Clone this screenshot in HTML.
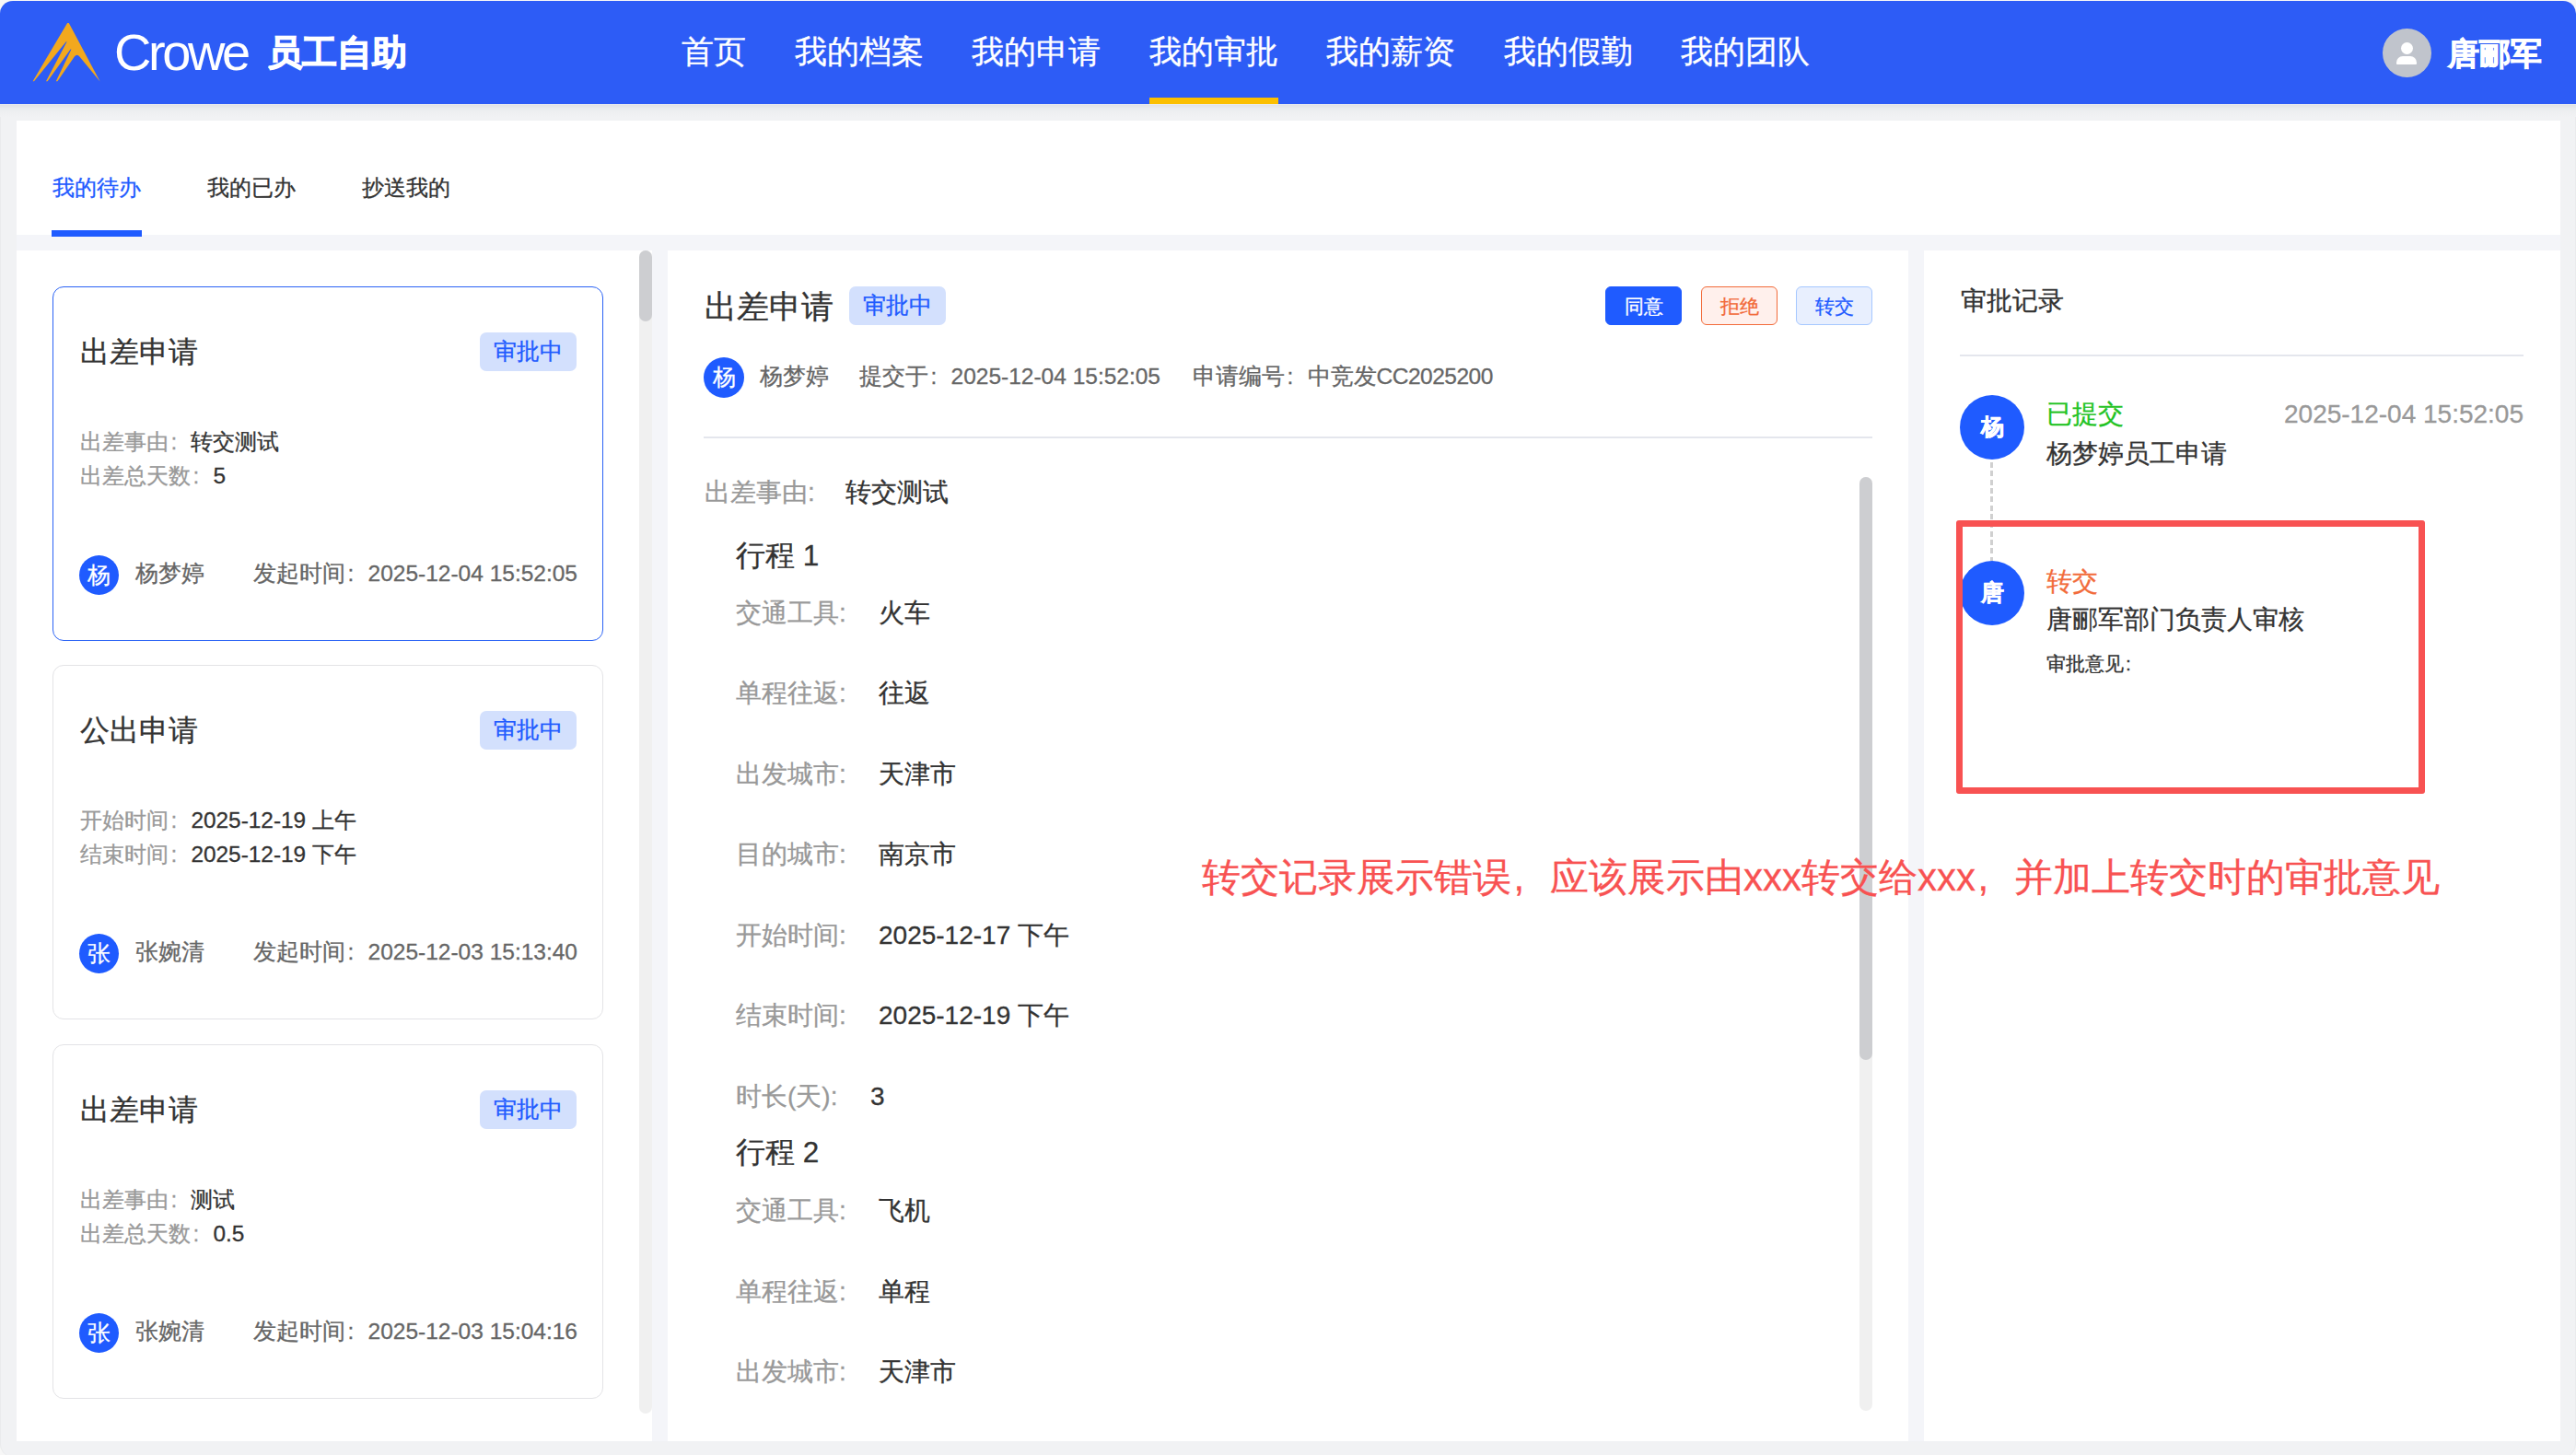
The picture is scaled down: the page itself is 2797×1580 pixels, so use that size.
<!DOCTYPE html>
<html><head><meta charset="utf-8">
<style>
html,body{margin:0;padding:0;width:2797px;height:1580px;overflow:hidden;background:#f7f7f7;}
body{font-family:"Liberation Sans",sans-serif;position:relative;-webkit-text-stroke:0.3px currentColor;}
.abs{position:absolute;}
.co{display:inline-block;width:1em;text-indent:0.1em;}
.cm{display:inline-block;width:1em;text-indent:0.06em;}
.t{position:absolute;white-space:nowrap;}
#page{position:absolute;left:0;top:1px;width:2797px;height:1580.5px;background:#f1f2f4;border-radius:14px;overflow:hidden;box-shadow:inset 1px 0 0 #eaebed,inset -1px 0 0 #eaebed;}
#hdr{position:absolute;left:0;top:0;width:2797px;height:112px;background:#2d5cf6;}
#shadow{position:absolute;left:0;top:112px;width:2797px;height:14px;background:linear-gradient(#f3f4f6 0px,#e2e3e6 1px,#eceef0 6px,#f1f2f4 14px);}
.nav{position:absolute;top:37px;font-size:35px;line-height:35px;color:#fff;}
.white{background:#fff;}
.card{position:absolute;left:57px;width:598px;height:385px;box-sizing:border-box;border:1.5px solid #e3e3e6;border-radius:12px;background:#fff;}
.card.sel{border-color:#2b63f5;}
.ctitle{position:absolute;left:29px;top:55px;font-size:31.5px;line-height:31.5px;color:#333;}
.tag{position:absolute;background:#d3e0fd;color:#1f5bff;border-radius:7px;font-size:24.5px;line-height:42px;height:42px;text-align:center;}
.row{position:absolute;left:29px;font-size:24.4px;line-height:24px;color:#999;}
.row b{font-weight:normal;color:#333;}
.av{position:absolute;border-radius:50%;background:#1f5bff;color:#fff;text-align:center;}
.sb-track{position:absolute;width:14px;background:#f0f0f0;border-radius:7px;}
.sb-thumb{position:absolute;width:14px;background:#cdced1;border-radius:7px;}
.lbl{position:absolute;font-size:28px;line-height:28px;color:#999;}
.val{position:absolute;font-size:28px;line-height:28px;color:#333;}
.btn{position:absolute;top:310px;height:42px;width:83px;box-sizing:border-box;border-radius:6px;font-size:21px;line-height:41px;text-align:center;}
</style></head>
<body>
<div id="page">
  <!-- header -->
  <div id="hdr">
    <svg class="abs" style="left:30px;top:19px" width="85" height="75" viewBox="30 20 85 75">
      <path d="M73.1 25 L74.8 25 L108.6 88.4 L86.4 61.4 Q83.6 58.2 80.8 61.6 L62.4 88.3 L60.8 88.3 L77 54.4 Q77.8 52.6 76.4 53.8 L51.6 88.3 L50 88.3 L72.2 46 Q73 44.2 71.6 45.6 L37 88.3 L35.6 88.3 Z" fill="#f2a81e"/>
    </svg>
    <div class="t" style="left:124px;top:27.5px;font-size:56px;line-height:56px;color:#fff;letter-spacing:-3.4px;-webkit-text-stroke:0;">Crowe</div>
    <div class="t" style="left:289.5px;top:36.5px;font-size:38.3px;line-height:38.3px;color:#fff;font-weight:bold;-webkit-text-stroke:1.1px #fff;">员工自助</div>
    <div class="nav" style="left:740px">首页</div>
    <div class="nav" style="left:863px">我的档案</div>
    <div class="nav" style="left:1055px">我的申请</div>
    <div class="nav" style="left:1248px">我的审批</div>
    <div class="nav" style="left:1440px">我的薪资</div>
    <div class="nav" style="left:1633px">我的假勤</div>
    <div class="nav" style="left:1825px">我的团队</div>
    <div class="abs" style="left:1248px;top:105px;width:140px;height:7px;background:#fbbf00;"></div>
    <div class="abs" style="left:2587px;top:30px;width:53px;height:53px;border-radius:50%;background:#c0c4cc;">
      <div class="abs" style="left:20px;top:15px;width:13px;height:13px;border-radius:50%;background:#fff;"></div>
      <div class="abs" style="left:15px;top:30px;width:22px;height:9px;border-radius:7px 7px 1px 1px;background:#fff;"></div>
    </div>
    <div class="t" style="left:2658px;top:39.5px;font-size:34px;line-height:34px;color:#fff;font-weight:bold;-webkit-text-stroke:0.9px #fff;">唐郦军</div>
  </div>
  <div id="shadow"></div>

  <!-- tabs card -->
  <div class="abs white" style="left:18px;top:130px;width:2762px;height:124px;"></div>
  <div class="abs" style="left:18px;top:254px;width:2762px;height:17px;background:#f4f5f9;"></div>
  <div class="t" style="left:56.5px;top:190.5px;font-size:24.4px;line-height:24.4px;color:#1f5bff;">我的待办</div>
  <div class="t" style="left:224.5px;top:190.5px;font-size:24.4px;line-height:24.4px;color:#333;">我的已办</div>
  <div class="t" style="left:392.5px;top:190.5px;font-size:24.4px;line-height:24.4px;color:#333;">抄送我的</div>
  <div class="abs" style="left:56px;top:249px;width:98px;height:7px;background:#1f5bff;"></div>

  <!-- left panel -->
  <div class="abs white" style="left:18px;top:271px;width:690px;height:1293px;"></div>
  <div class="abs" style="left:708px;top:271px;width:17px;height:1293px;background:#f4f5f9;"></div>
  <div class="sb-track" style="left:694px;top:271px;height:1263px;"></div>
  <div class="sb-thumb" style="left:694px;top:271px;height:77px;"></div>

  <div class="card sel" style="top:310px;">
    <div class="ctitle">出差申请</div>
    <div class="tag" style="left:463px;top:48.6px;width:105px;">审批中</div>
    <div class="row" style="top:156px;">出差事由<span class="co">:</span><b>转交测试</b></div>
    <div class="row" style="top:193px;">出差总天数<span class="co">:</span><b>5</b></div>
    <div class="av" style="left:28px;top:291px;width:43px;height:43px;font-size:24.5px;line-height:43px;">杨</div>
    <div class="t" style="left:89px;top:299px;font-size:24.5px;line-height:24.5px;color:#666;">杨梦婷</div>
    <div class="t" style="right:27px;top:299px;font-size:24.5px;line-height:24.5px;color:#666;">发起时间<span class="co">:</span>2025-12-04 15:52:05</div>
  </div>
  <div class="card" style="top:721px;">
    <div class="ctitle">公出申请</div>
    <div class="tag" style="left:463px;top:48.6px;width:105px;">审批中</div>
    <div class="row" style="top:156px;">开始时间<span class="co">:</span><b>2025-12-19 上午</b></div>
    <div class="row" style="top:193px;">结束时间<span class="co">:</span><b>2025-12-19 下午</b></div>
    <div class="av" style="left:28px;top:291px;width:43px;height:43px;font-size:24.5px;line-height:43px;">张</div>
    <div class="t" style="left:89px;top:299px;font-size:24.5px;line-height:24.5px;color:#666;">张婉清</div>
    <div class="t" style="right:27px;top:299px;font-size:24.5px;line-height:24.5px;color:#666;">发起时间<span class="co">:</span>2025-12-03 15:13:40</div>
  </div>
  <div class="card" style="top:1133px;">
    <div class="ctitle">出差申请</div>
    <div class="tag" style="left:463px;top:48.6px;width:105px;">审批中</div>
    <div class="row" style="top:156px;">出差事由<span class="co">:</span><b>测试</b></div>
    <div class="row" style="top:193px;">出差总天数<span class="co">:</span><b>0.5</b></div>
    <div class="av" style="left:28px;top:291px;width:43px;height:43px;font-size:24.5px;line-height:43px;">张</div>
    <div class="t" style="left:89px;top:299px;font-size:24.5px;line-height:24.5px;color:#666;">张婉清</div>
    <div class="t" style="right:27px;top:299px;font-size:24.5px;line-height:24.5px;color:#666;">发起时间<span class="co">:</span>2025-12-03 15:04:16</div>
  </div>

  <!-- middle panel -->
  <div class="abs white" style="left:725px;top:271px;width:1347px;height:1293px;"></div>
  <div class="abs" style="left:2072px;top:271px;width:17px;height:1293px;background:#f4f5f9;"></div>
  <div class="t" style="left:765px;top:314px;font-size:35px;line-height:35px;color:#333;">出差申请</div>
  <div class="tag" style="left:922px;top:310px;width:105px;">审批中</div>
  <div class="btn" style="left:1743px;background:#1f5bff;color:#fff;border:1px solid #1f5bff;">同意</div>
  <div class="btn" style="left:1847px;background:#fff0ec;color:#f26b3a;border:1.5px solid #f26b3a;">拒绝</div>
  <div class="btn" style="left:1950px;background:#e8effe;color:#1f5bff;border:1.5px solid #a6c8ff;">转交</div>
  <div class="av" style="left:764px;top:387px;width:44px;height:44px;font-size:24.5px;line-height:44px;">杨</div>
  <div class="t" style="left:825px;top:396px;font-size:24.5px;line-height:24.5px;color:#666;">杨梦婷</div>
  <div class="t" style="left:933px;top:396px;font-size:24.5px;line-height:24.5px;color:#666;">提交于<span class="co">:</span>2025-12-04 15:52:05</div>
  <div class="t" style="left:1295px;top:396px;font-size:24.5px;line-height:24.5px;color:#666;">申请编号<span class="co">:</span>中竞发<span style="letter-spacing:-0.5px">CC2025200</span></div>
  <div class="abs" style="left:764px;top:473px;width:1269px;height:2px;background:#e4e6ed;"></div>

  <div class="sb-track" style="left:2019px;top:517px;height:1014px;"></div>
  <div class="sb-thumb" style="left:2019px;top:517px;height:633px;"></div>

  <div class="lbl" style="left:765px;top:520px;">出差事由:</div>
  <div class="val" style="left:918px;top:520px;">转交测试</div>
  <div class="t" style="left:799px;top:587px;font-size:31.5px;line-height:31.5px;color:#333;">行程 1</div>
  <div class="lbl" style="left:799px;top:651px;">交通工具:</div><div class="val" style="left:954px;top:651px;">火车</div>
  <div class="lbl" style="left:799px;top:738px;">单程往返:</div><div class="val" style="left:954px;top:738px;">往返</div>
  <div class="lbl" style="left:799px;top:826px;">出发城市:</div><div class="val" style="left:954px;top:826px;">天津市</div>
  <div class="lbl" style="left:799px;top:913px;">目的城市:</div><div class="val" style="left:954px;top:913px;">南京市</div>
  <div class="lbl" style="left:799px;top:1001px;">开始时间:</div><div class="val" style="left:954px;top:1001px;">2025-12-17 下午</div>
  <div class="lbl" style="left:799px;top:1088px;">结束时间:</div><div class="val" style="left:954px;top:1088px;">2025-12-19 下午</div>
  <div class="lbl" style="left:799px;top:1176px;">时长(天):</div><div class="val" style="left:945px;top:1176px;">3</div>
  <div class="t" style="left:799px;top:1235px;font-size:31.5px;line-height:31.5px;color:#333;">行程 2</div>
  <div class="lbl" style="left:799px;top:1300px;">交通工具:</div><div class="val" style="left:954px;top:1300px;">飞机</div>
  <div class="lbl" style="left:799px;top:1388px;">单程往返:</div><div class="val" style="left:954px;top:1388px;">单程</div>
  <div class="lbl" style="left:799px;top:1475px;">出发城市:</div><div class="val" style="left:954px;top:1475px;">天津市</div>

  <!-- right panel -->
  <div class="abs white" style="left:2089px;top:271px;width:691px;height:1293px;"></div>
  <div class="t" style="left:2129px;top:312px;font-size:28px;line-height:28px;color:#333;">审批记录</div>
  <div class="abs" style="left:2128px;top:384px;width:612px;height:2px;background:#e4e6ed;"></div>
  <div class="abs" style="left:2161px;top:501px;width:3px;height:107px;background:repeating-linear-gradient(#d0d0d0 0 5.8px,transparent 5.8px 9.35px);"></div>
  <div class="av" style="left:2128px;top:428px;width:70px;height:70px;font-size:25px;line-height:68px;font-weight:bold;-webkit-text-stroke:0.6px #fff;">杨</div>
  <div class="t" style="left:2222px;top:435px;font-size:28px;line-height:28px;color:#22c322;">已提交</div>
  <div class="t" style="left:2480px;top:435px;font-size:28px;line-height:28px;color:#999;">2025-12-04 15:52:05</div>
  <div class="t" style="left:2222px;top:478px;font-size:28px;line-height:28px;color:#333;">杨梦婷员工申请</div>
  <div class="av" style="left:2128px;top:608px;width:70px;height:70px;font-size:25px;line-height:68px;font-weight:bold;-webkit-text-stroke:0.6px #fff;">唐</div>
  <div class="t" style="left:2222px;top:617px;font-size:28px;line-height:28px;color:#f26b3a;">转交</div>
  <div class="t" style="left:2222px;top:658px;font-size:28px;line-height:28px;color:#333;">唐郦军部门负责人审核</div>
  <div class="t" style="left:2222px;top:709px;font-size:21px;line-height:21px;color:#333;">审批意见<span class="co">:</span></div>

  <!-- annotation -->
  <div class="abs" style="left:2124px;top:564px;width:509px;height:297px;box-sizing:border-box;border:7px solid #f85252;border-radius:3px;"></div>
  <div class="t" style="left:1305px;top:931px;font-size:42px;line-height:42px;color:#f85252;">转交记录展示错误<span class="cm">,</span>应该展示由xxx转交给xxx<span class="cm">,</span>并加上转交时的审批意见</div>
</div>
</body></html>
